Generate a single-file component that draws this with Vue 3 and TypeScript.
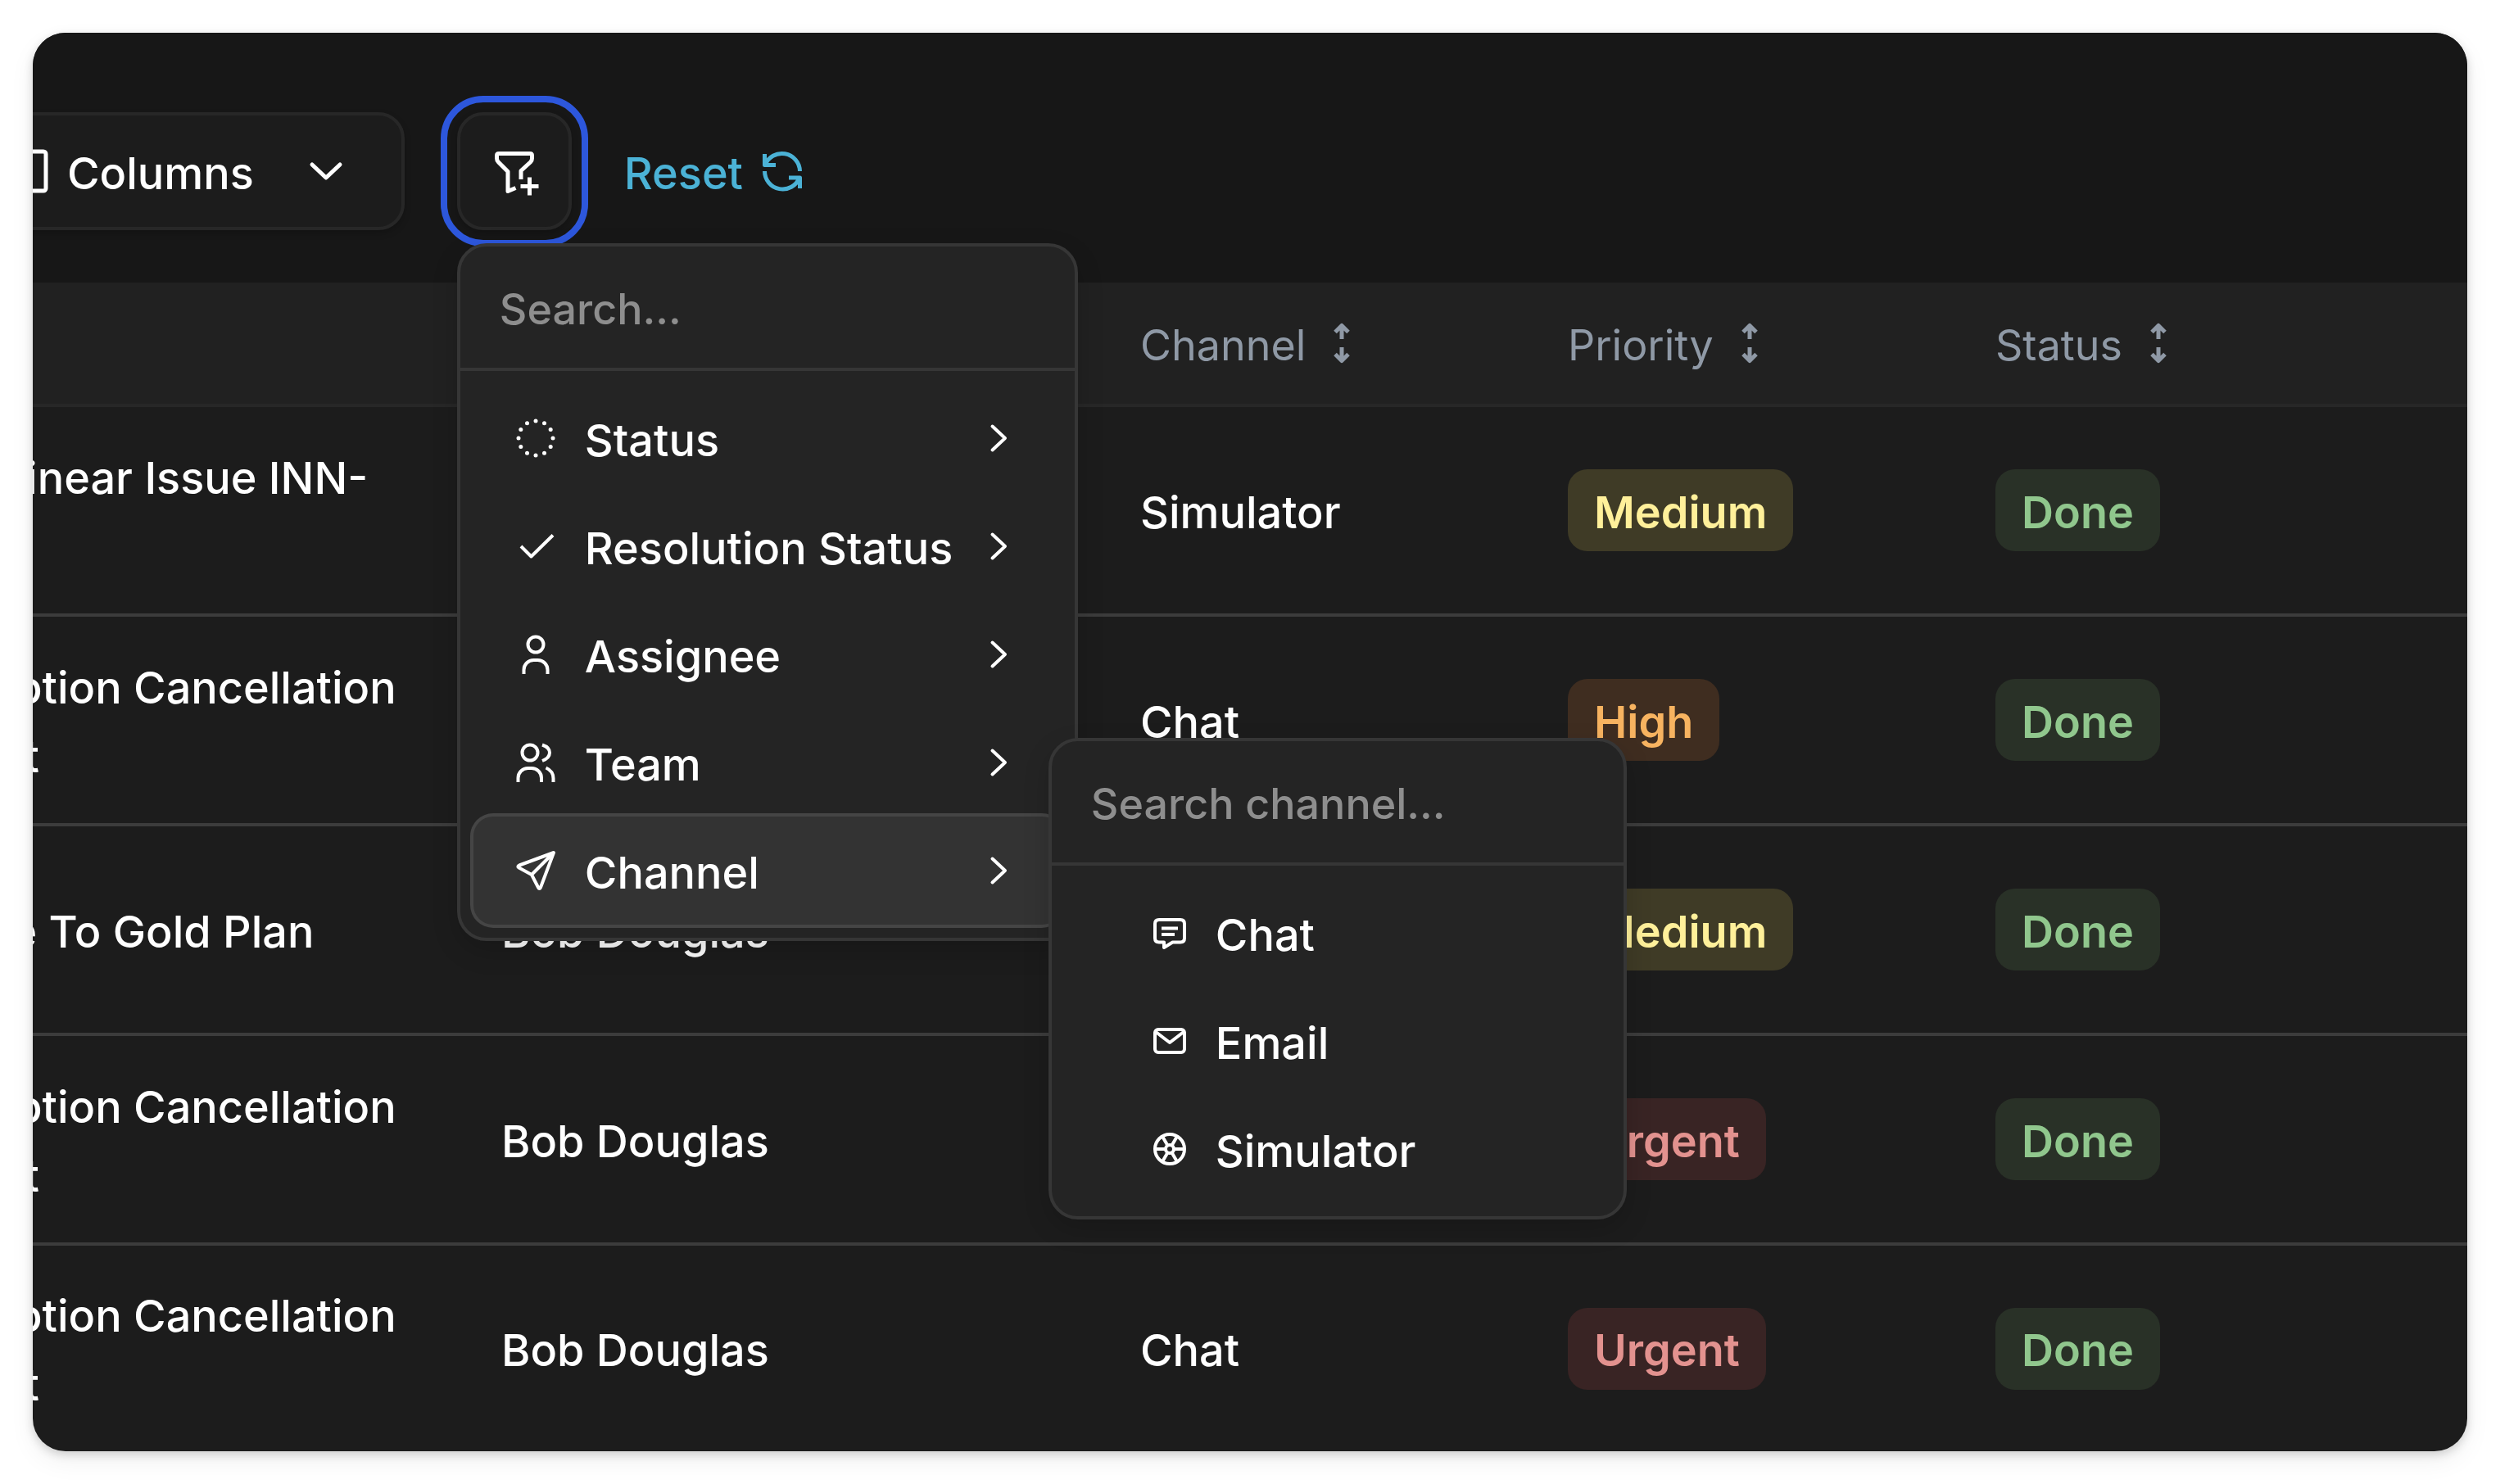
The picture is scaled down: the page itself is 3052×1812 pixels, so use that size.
<script setup lang="ts">
import { ref } from 'vue'

type Priority = 'Medium' | 'High' | 'Urgent'

interface Conversation {
  title: string
  assignee: string
  channel: string
  priority: Priority
  status: string
}

interface FilterItem {
  label: string
  icon: string
}

const filters: FilterItem[] = [
  { label: 'Status', icon: 'status' },
  { label: 'Resolution Status', icon: 'check' },
  { label: 'Assignee', icon: 'user' },
  { label: 'Team', icon: 'users' },
  { label: 'Channel', icon: 'send' },
]

const channels: FilterItem[] = [
  { label: 'Chat', icon: 'chat' },
  { label: 'Email', icon: 'mail' },
  { label: 'Simulator', icon: 'wheel' },
]

const conversations: Conversation[] = [
  { title: 'Check Linear Issue INN-2048', assignee: 'Bob Douglas', channel: 'Simulator', priority: 'Medium', status: 'Done' },
  { title: 'Subscription Cancellation Payment', assignee: 'Bob Douglas', channel: 'Chat', priority: 'High', status: 'Done' },
  { title: 'Upgrade To Gold Plan', assignee: 'Bob Douglas', channel: 'Chat', priority: 'Medium', status: 'Done' },
  { title: 'Subscription Cancellation Payment', assignee: 'Bob Douglas', channel: 'Chat', priority: 'Urgent', status: 'Done' },
  { title: 'Subscription Cancellation Payment', assignee: 'Bob Douglas', channel: 'Chat', priority: 'Urgent', status: 'Done' },
]

const sortable = ['Assignee', 'Channel', 'Priority', 'Status']

const activeFilter = ref('Channel')
const filterQuery = ref('')
const channelQuery = ref('')

// Twelve dots evenly spaced round the status ring
const dots = Array.from({ length: 12 }, (_, i) => {
  const a = (i * Math.PI) / 6
  return { x: 32 + 21 * Math.cos(a), y: 32 + 21 * Math.sin(a) }
})
</script>

<template>
  <main class="page">
    <section class="panel">
      <header class="toolbar">
        <button type="button" class="btn columns">
          <svg class="icon" viewBox="0 0 64 64">
            <rect x="10" y="8" width="44" height="48" rx="3" />
            <path d="M32 8v48" />
          </svg>
          <span class="label">Columns</span>
          <svg class="icon caret" viewBox="0 0 64 64"><path d="M15 24l17 16 17-16" /></svg>
        </button>

        <div class="filter">
          <button type="button" class="btn filter-btn" aria-label="Add filter" aria-expanded="true">
            <svg class="icon" viewBox="0 0 64 64">
              <path d="M40 42V31.500L51.500 21q2-2 2-4.500V13q0-2.500-2.500-2.500H13q-2.500 0-2.500 2.500v3.500q0 2.500 2 4.500L24 32.500V56.500l9.500-4" />
              <path d="M50.500 39.500v22M39.500 50.500h22" />
            </svg>
          </button>

          <div class="menu">
            <input v-model="filterQuery" class="search" type="text" placeholder="Search..." aria-label="Search filters" />
            <ul class="items">
              <li v-for="f in filters" :key="f.label" class="entry">
                <button type="button" class="item" :class="{ active: f.label === activeFilter }" @mouseenter="activeFilter = f.label">
                  <svg class="icon" viewBox="0 0 64 64">
                    <g v-if="f.icon === 'status'" class="solid">
                      <circle v-for="(d, i) in dots" :key="i" :cx="d.x" :cy="d.y" r="2.500" />
                    </g>
                    <path v-else-if="f.icon === 'check'" d="M14 32l12.500 12.500L53 18.500" />
                    <g v-else-if="f.icon === 'user'">
                      <circle cx="32" cy="20" r="9.500" />
                      <path d="M17.500 56v-5a12 12 0 0 1 12-12h5a12 12 0 0 1 12 12v5" />
                    </g>
                    <g v-else-if="f.icon === 'users'">
                      <circle cx="25" cy="20" r="9.500" />
                      <path d="M10.500 56v-5a12 12 0 0 1 12-12h4.500a12 12 0 0 1 12 12v5" />
                      <path d="M40 10.500q9 3 9 9.500t-9 10" />
                      <path d="M44.500 38.500q9 4 9 13V56" />
                    </g>
                    <path v-else d="M54 10L12 25.500q-3 1.500-.5 3L27 37l8 15.500q1.500 3 3 0zL27 37" />
                  </svg>
                  <span class="label">{{ f.label }}</span>
                  <svg class="icon chevron" viewBox="0 0 64 64"><path d="M23.500 17.500L39 32 23.500 46.500" /></svg>
                </button>

                <div v-if="f.label === 'Channel'" class="menu submenu">
                  <input v-model="channelQuery" class="search" type="text" placeholder="Search channel..." aria-label="Search channel" />
                  <ul class="items">
                    <li v-for="c in channels" :key="c.label">
                      <button type="button" class="item option">
                        <svg class="icon small" viewBox="0 0 56 56">
                          <g v-if="c.icon === 'chat'">
                            <path d="M15 12h26q5 0 5 5v17.500q0 5-5 5H31.500L21 46v-6.500h-6q-5 0-5-5V17q0-5 5-5z" />
                            <path d="M18 22.500h20M18 30h16" />
                          </g>
                          <g v-else-if="c.icon === 'mail'">
                            <rect x="10" y="14" width="36" height="28" rx="4" />
                            <path d="M11 17l17 13 17-13" />
                          </g>
                          <g v-else>
                            <circle cx="28" cy="28" r="18" />
                            <circle cx="28" cy="28" r="5" />
                            <path d="M10 28h13M33 28h13M30.500 23.700L37 12.400M19 43.600l6.500-11.300M25.500 23.700L19 12.400M37 43.600l-6.500-11.300" />
                          </g>
                        </svg>
                        <span class="label">{{ c.label }}</span>
                      </button>
                    </li>
                  </ul>
                </div>
              </li>
            </ul>
          </div>
        </div>

        <button type="button" class="reset">
          <span class="label">Reset</span>
          <svg class="icon" viewBox="0 0 64 64">
            <path d="M10.500 11v13.500H24M11 24.500A22 22 0 0 1 53.500 32" />
            <path d="M53.500 53V40H40M10.500 32A22 22 0 0 0 53 40" />
          </svg>
        </button>
      </header>

      <table class="grid">
        <colgroup>
          <col class="c-title" />
          <col class="c-assignee" />
          <col class="c-mid" />
          <col class="c-mid" />
          <col />
        </colgroup>
        <thead>
          <tr>
            <th scope="col" aria-label="Title"></th>
            <th v-for="name in sortable" :key="name" scope="col">
              <span class="sort">
                <span class="label">{{ name }}</span>
                <svg class="icon" viewBox="0 0 64 64">
                  <path d="M32 27V11M24 18.500l8-8 8 8M32 37v16M24 45.500l8 8 8-8" />
                </svg>
              </span>
            </th>
          </tr>
        </thead>
        <tbody>
          <tr v-for="(row, i) in conversations" :key="i">
            <td>{{ row.title }}</td>
            <td>{{ row.assignee }}</td>
            <td>{{ row.channel }}</td>
            <td class="tagged"><span class="badge" :class="row.priority.toLowerCase()">{{ row.priority }}</span></td>
            <td class="tagged"><span class="badge done">{{ row.status }}</span></td>
          </tr>
        </tbody>
      </table>
    </section>
  </main>
</template>

<style>
body {
  margin: 0;
  background: #fff;
}
</style>

<style scoped>
.page {
  padding: 40px;
  font-family: Inter, "Liberation Sans", sans-serif;
  font-size: 54px;
  font-weight: 500;
  line-height: 84px;
  color: #fff;
}

.panel {
  overflow: hidden;
  border-radius: 40px;
  background: #1c1c1c;
  box-shadow: 0 4px 12px rgba(0, 0, 0, 0.16), 0 12px 32px rgba(0, 0, 0, 0.06);
}

button,
input {
  margin: 0;
  font: inherit;
  color: inherit;
}

.label {
  padding-top: 5px;
  white-space: nowrap;
}

.icon {
  flex: none;
  width: 64px;
  height: 64px;
  fill: none;
  stroke: currentColor;
  stroke-width: 5;
  stroke-linejoin: round;
}

.solid {
  fill: currentColor;
  stroke: none;
}

.toolbar {
  display: flex;
  align-items: center;
  gap: 64px;
  margin-left: -102px;
  padding: 97px 0 64px;
  background: #171717;
}

.btn {
  display: flex;
  align-items: center;
  box-sizing: border-box;
  height: 144px;
  border: 4px solid #272727;
  border-radius: 32px;
  background: #1c1c1c;
  box-shadow: 0 4px 8px rgba(0, 0, 0, 0.2);
}

.columns {
  gap: 16px;
  padding: 0 60px;
}

.caret {
  margin-left: 40px;
  stroke-linecap: round;
}

.filter {
  position: relative;
}

.filter-btn {
  justify-content: center;
  width: 140px;
  padding: 0;
  outline: 8px solid #2d57dc;
  outline-offset: 12px;
}

.reset {
  display: flex;
  align-items: center;
  gap: 16px;
  padding: 0;
  border: 0;
  background: none;
  color: #4bb2d6;
}

.menu {
  position: absolute;
  z-index: 2;
  top: 160px;
  left: 0;
  box-sizing: border-box;
  width: 758px;
  border: 4px solid #363636;
  border-radius: 36px;
  background: #242424;
  box-shadow: 0 12px 32px rgba(0, 0, 0, 0.16);
}

.submenu {
  top: -96px;
  left: calc(100% - 16px);
  width: 706px;
}

.search {
  display: block;
  box-sizing: border-box;
  width: 100%;
  height: 152px;
  padding: 5px 48px 0;
  border: 0;
  border-bottom: 4px solid #363636;
  outline: 0;
  background: none;
  font-size: 52px;
}

.search::placeholder {
  color: #8e8e8e;
  opacity: 1;
}

.items {
  margin: 0;
  padding: 16px;
  list-style: none;
}

.entry {
  position: relative;
}

.item {
  display: flex;
  align-items: center;
  gap: 28px;
  box-sizing: border-box;
  width: 100%;
  height: 132px;
  padding: 0 44px;
  border: 0;
  border-radius: 24px;
  background: none;
  text-align: left;
}

.item .label {
  flex: 1;
  min-width: 0;
}

.item .icon {
  stroke-width: 4;
}

.item.active {
  background: #333;
  box-shadow: 0 0 0 4px #454545;
}

.option {
  padding-left: 100px;
}

.chevron {
  stroke-linecap: round;
}

.icon.small {
  width: 56px;
  height: 56px;
}

.grid {
  width: calc(100% + 266px);
  margin-left: -266px;
  border-spacing: 0;
  table-layout: fixed;
}

.c-title {
  width: 790px;
}

.c-assignee {
  width: 780px;
}

.c-mid {
  width: 522px;
}

th {
  box-sizing: border-box;
  height: 152px;
  padding: 0 48px;
  border-bottom: 4px solid #272727;
  background: #212121;
  color: #8f99a6;
  font-size: 52px;
  font-weight: 400;
  text-align: left;
}

.sort {
  display: flex;
  align-items: center;
  gap: 12px;
}

td {
  box-sizing: border-box;
  height: 256px;
  padding: 5px 48px 0;
  border-bottom: 4px solid #3c3c3c;
}

.tagged {
  padding-top: 0;
}

tbody tr:last-child td {
  height: 251px;
  border-bottom: 0;
}

.badge {
  display: flex;
  align-items: center;
  box-sizing: border-box;
  width: fit-content;
  height: 100px;
  padding: 5px 32px 0;
  border-radius: 24px;
  font-weight: 600;
}

.medium {
  background: #3f3b26;
  color: #fff09a;
}

.high {
  background: #3f2d20;
  color: #f7b360;
}

.urgent {
  background: #392424;
  color: #e3928f;
}

.done {
  background: #293127;
  color: #90c78d;
}
</style>
